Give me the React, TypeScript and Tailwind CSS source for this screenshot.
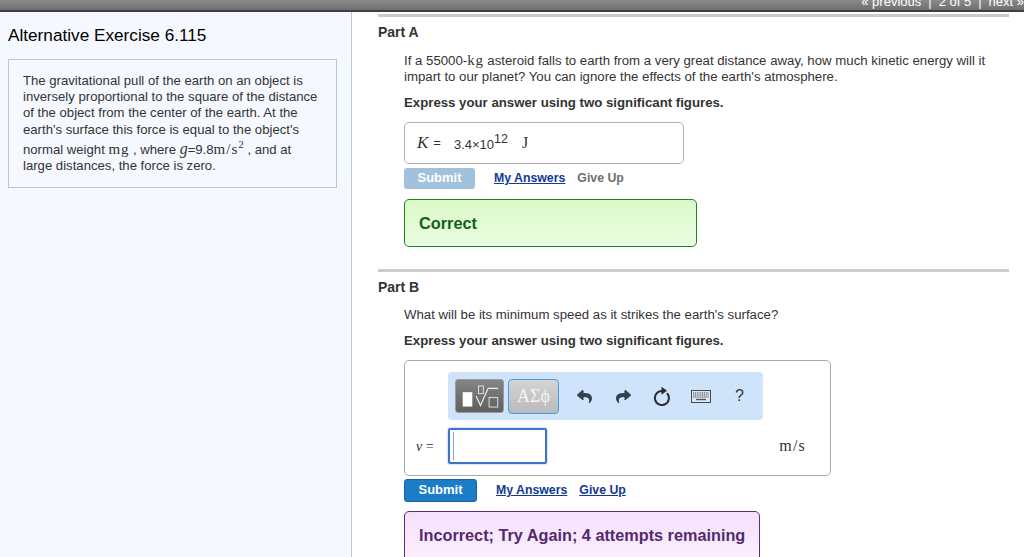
import React from 'react';
import { FaReply, FaShare } from 'react-icons/fa';

const serif = 'font-["Liberation_Serif",serif]';

const Keyboard = () => (
  <svg width="20" height="13" viewBox="0 0 20 13">
    <rect x="0.5" y="0.5" width="19" height="12" fill="#dfe6ee" stroke="#3d4a57" />
    <path d="M2 3h16M2 5h16M2 7h16" stroke="#4a5560" strokeWidth="1.2" strokeDasharray="1.2 .6" />
    <path d="M5 9.5h10" stroke="#4a5560" strokeWidth="1.4" />
  </svg>
);

const Reset = () => (
  <svg width="18" height="20" viewBox="0 0 18 20">
    <path d="M14 7.2A7 7 0 1 1 9 5" fill="none" stroke="#2b2b2b" strokeWidth="2" />
    <path d="M8.5 0.8v8l5.5-4z" fill="#2b2b2b" />
  </svg>
);

const TemplateIcon = () => (
  <svg width="49" height="34" viewBox="0 0 49 34">
    <rect x="7" y="13" width="10" height="15" fill="#fff" />
    <rect x="23.5" y="6.5" width="5" height="8" fill="none" stroke="#e4e4e4" />
    <path d="M21 17l4.5 10 8-18h10.5" fill="none" stroke="#f0f0f0" strokeWidth="1.2" />
    <rect x="34.5" y="18.5" width="9" height="10" fill="none" stroke="#e4e4e4" />
  </svg>
);

const Part = ({ name, children }: { name: string; children: React.ReactNode }) => (
  <section>
    <div className="h-[3px] bg-[#cccccc]" />
    <h2 className="mt-[7px] text-[14px] leading-[17px] font-bold text-[#333]">{name}</h2>
    <div className="pl-[26px]">{children}</div>
  </section>
);

export default function App() {
  return (
    <div className='h-[557px] w-[1024px] overflow-hidden bg-white font-["Liberation_Sans",sans-serif] text-[#333]'>
      <header className="flex h-[12px] items-end justify-end overflow-hidden border-b-2 border-[#3f3f3f] bg-gradient-to-b from-[#8a8a8a] to-[#6f6f6f] text-[13px] leading-[14px] text-white">
        <div className="flex h-[15px] shrink-0 items-start">
          <span>« previous</span>
          <span className="mx-[7px]">|</span>
          <span>2 of 5</span>
          <span className="mx-[7px]">|</span>
          <span>next »</span>
        </div>
      </header>

      <div className="flex h-[545px]">
        <aside className="w-[352px] shrink-0 border-r border-[#b9c9da] bg-[#f5f9ff] pl-[8px] pr-[14px]">
          <h1 className="mt-[13px] text-[17.2px] leading-[20px] text-black">Alternative Exercise 6.115</h1>
          <div className="mt-[14px] border border-[#b4c8dc] px-[14px] pt-[13px] pb-[13px] text-[13.15px] leading-[16.2px]">
            <p>
              The gravitational pull of the earth on an object is inversely proportional to the square of the distance
              of the object from the center of the earth. At the earth's surface this force is equal to the object's
            </p>
            <p className="mt-[3px]">
              normal weight <span className={`${serif} text-[15px] tracking-[0.8px]`}>mg</span> , where{' '}
              <span className={`${serif} italic text-[16px]`}>g</span>=9.8
              <span className={`${serif} text-[15px] tracking-[1px]`}>m/s</span>
              <sup className={`${serif} text-[11px]`}>2</sup> , and at
              <br />
              large distances, the force is zero.
            </p>
          </div>
        </aside>

        <main className="min-w-0 flex-1 pl-[26px] pr-[15px] pt-[2px]">
          <Part name="Part A">
            <p className="mt-[11px] text-[13.22px] leading-[16px]">
              If a 55000-<span className={`${serif} text-[15px] tracking-[0.7px]`}>kg</span> asteroid falls to earth from
              a very great distance away, how much kinetic energy will it impart to our planet? You can ignore the
              effects of the earth's atmosphere.
            </p>
            <p className="mt-[10px] text-[13.22px] leading-[16px] font-bold">Express your answer using two significant figures.</p>
            <div className="mt-[11px] flex h-[42px] w-[280px] items-center rounded-[5px] border border-[#b0b0b0] pl-[12px]">
              <span className={`${serif} italic text-[17px]`}>K</span>
              <span className="ml-[5px] text-[13px]">=</span>
              <span className="ml-[13px] mt-[4px] text-[13px]">
                3.4×10<sup className="text-[12.5px]">12</sup>
              </span>
              <span className={`${serif} ml-[14px] text-[16px]`}>J</span>
            </div>
            <div className="mt-[3px] flex h-[22px] items-center text-[12.3px] font-bold">
              <span className="flex h-[21px] w-[71px] items-center justify-center rounded-[3px] bg-[#a1c1dc] text-[13px] text-white">Submit</span>
              <span className="ml-[19px] text-[#123a93] underline">My Answers</span>
              <span className="ml-[12px] text-[#6e6e6e]">Give Up</span>
            </div>
            <div className="mt-[10px] flex h-[48px] w-[293px] items-center rounded-[5px] border border-[#1a8a1a] bg-gradient-to-b from-[#dcf8c8] to-[#eafde2] pl-[14px] text-[16.3px] font-bold text-[#14601a]">
              Correct
            </div>
          </Part>

          <div className="mt-[22px]">
            <Part name="Part B">
              <p className="mt-[11px] text-[13.22px] leading-[16px]">What will be its minimum speed as it strikes the earth's surface?</p>
              <p className="mt-[10px] text-[13.22px] leading-[16px] font-bold">Express your answer using two significant figures.</p>
              <div className="mt-[11px] h-[116px] w-[427px] rounded-[5px] border border-[#a9a9a9] pt-[11px]">
                <div className="ml-[43px] flex h-[48px] w-[315px] items-center rounded-[4px] bg-[#cfe4fb] pl-[7px]">
                  <div className="flex h-[34px] w-[49px] items-center justify-center rounded-[3px] border border-[#9a9a9a] bg-gradient-to-b from-[#858585] to-[#5f5f5f]">
                    <TemplateIcon />
                  </div>
                  <div className={`${serif} ml-[4px] flex h-[35px] w-[51px] items-center justify-center rounded-[4px] border border-[#4a9be8] bg-gradient-to-b from-[#d4d4d4] to-[#bababa] text-[18px] text-[#f4f4f4]`}>
                    ΑΣϕ
                  </div>
                  <FaReply className="ml-[18px]" size={15} color="#33404d" />
                  <FaShare className="ml-[24px]" size={15} color="#33404d" />
                  <span className="ml-[22px]"><Reset /></span>
                  <span className="ml-[20px]"><Keyboard /></span>
                  <span className="ml-[24px] text-[16px] text-[#333]">?</span>
                </div>
                <div className="mt-[8px] flex items-center pl-[11px]">
                  <span className={`${serif} text-[14px]`}><i>v</i> =</span>
                  <div className="ml-[14px] flex h-[36px] w-[99px] items-center rounded-[2px] border-2 border-[#3d74c8] pl-[3px] shadow-[0_0_2px_#7aa5e8]">
                    <div className="h-[28px] w-px bg-[#7d9fe0]" />
                  </div>
                  <span className={`${serif} ml-auto mr-[24px] text-[16px] tracking-[1.2px]`}>m/s</span>
                </div>
              </div>
              <div className="mt-[2px] flex h-[24px] items-center text-[12.3px] font-bold">
                <span className="flex h-[23px] w-[73px] items-center justify-center rounded-[3px] border border-[#1b629f] bg-[#1b7cc7] text-[13px] text-white">Submit</span>
                <span className="ml-[19px] text-[#123a93] underline">My Answers</span>
                <span className="ml-[12px] text-[#123a93] underline">Give Up</span>
              </div>
              <div className="mt-[9px] flex h-[60px] w-[356px] items-start rounded-[5px] border border-[#5f2a80] bg-gradient-to-b from-[#f4e0fb] to-[#fdf2ff] pl-[14px] pt-[13px] text-[16.25px] leading-[20px] font-bold text-[#532a70]">
                Incorrect; Try Again; 4 attempts remaining
              </div>
            </Part>
          </div>
        </main>
      </div>
    </div>
  );
}
